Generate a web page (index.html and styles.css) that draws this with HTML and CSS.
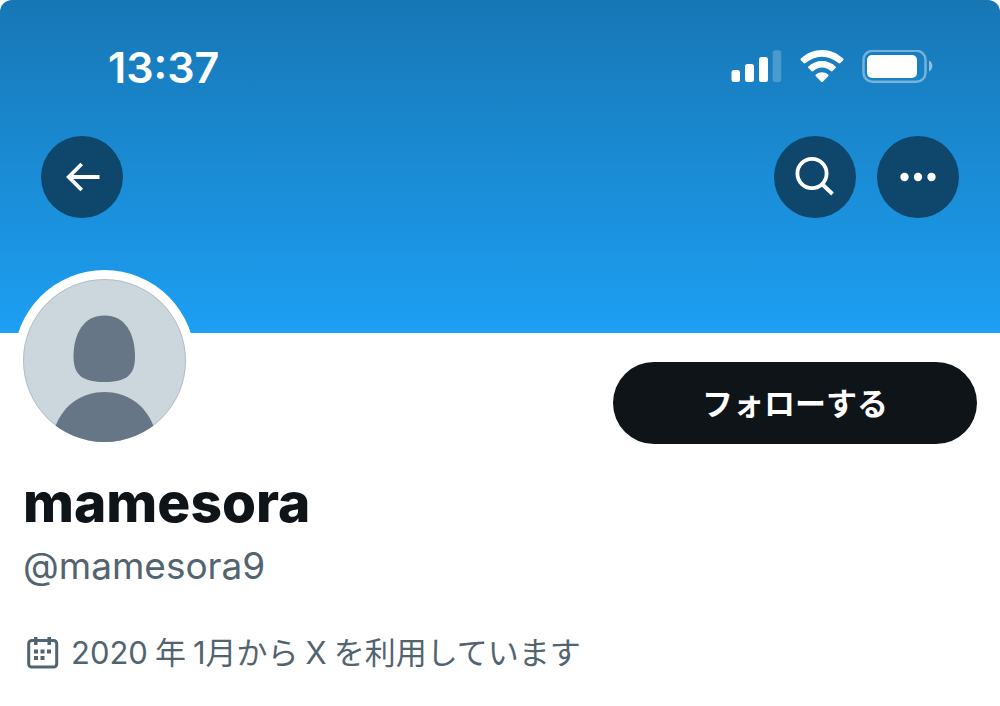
FILE: index.html
```html
<!DOCTYPE html>
<html lang="ja">
<head>
  <meta charset="UTF-8" />
  <meta name="viewport" content="width=device-width, initial-scale=1" />
  <title>mamesora (@mamesora9)</title>
  <link rel="stylesheet" href="styles.css">
</head>
<body>

  <header class="banner">
    <div class="status-bar">
      <time class="clock">13:37</time>
      <div class="status-icons">
        <svg width="51" height="34" viewBox="0 0 51 34" fill="#fff" aria-hidden="true">
          <rect x="0.500" y="20" width="8.500" height="12" rx="2.500" />
          <rect x="14" y="14" width="9" height="18" rx="2.500" />
          <rect x="28" y="7" width="9" height="25" rx="2.500" />
          <rect x="41.700" y="0.300" width="8.500" height="31.700" rx="2.500" opacity="0.22" />
        </svg>
        <svg width="44" height="34" viewBox="0 0 44 34" fill="#fff" aria-hidden="true">
          <path d="M1.200 8.300C7 3 14 0 22 0s15 3 20.800 8.300c.9.800.8 1.500.2 2.200l-2.600 2.500c-.7.700-1.300.6-2 0C33.800 9 28.200 6.700 22 6.700S10.200 9 5.600 13c-.7.600-1.300.7-2 0L1 10.500c-.6-.7-.7-1.400.2-2.200z" />
          <path d="M8.600 16.200c3.800-3.300 8.300-5.300 13.400-5.300s9.600 2 13.400 5.300c.8.700.7 1.300.1 1.900l-2.900 2.900c-.7.700-1.200.5-1.900 0-2.500-2-5.300-3.400-8.700-3.400S15.800 19 13.300 21c-.7.500-1.200.7-1.900 0l-2.900-2.900c-.6-.6-.7-1.200.1-1.900z" />
          <path d="M16 24.500c3.600-3 8.400-3 12 0 .8.700.7 1.200.1 1.800l-5 5.200c-.8.800-1.400.8-2.200 0l-5-5.200c-.6-.6-.7-1.100.1-1.800z" />
        </svg>
        <svg width="71" height="34" viewBox="0 0 71 34" aria-hidden="true">
          <rect x="1.500" y="0.800" width="62" height="31" rx="9" fill="none" stroke="#fff" stroke-opacity="0.4" stroke-width="2.500" />
          <rect x="5" y="5" width="50" height="23" rx="5" fill="#fff" />
          <path d="M67 10.500c4.500 2 4.500 9 0 11z" fill="#fff" fill-opacity="0.5" />
        </svg>
      </div>
    </div>

    <nav class="toolbar">
      <button type="button" class="btn-round" aria-label="戻る">
        <svg width="82" height="82" viewBox="0 0 82 82" fill="none" stroke="#fff" stroke-width="3.800" aria-hidden="true">
          <path d="M58.500 41H28M40.700 28L27.700 41l13 13" />
        </svg>
      </button>
      <div class="toolbar-right">
        <button type="button" class="btn-round" aria-label="検索">
          <svg width="82" height="82" viewBox="0 0 82 82" fill="none" stroke="#fff" stroke-width="3.800" aria-hidden="true">
            <circle cx="38" cy="37.500" r="14.600" />
            <path d="M48 48l10.500 10" />
          </svg>
        </button>
        <button type="button" class="btn-round" aria-label="その他">
          <svg width="82" height="82" viewBox="0 0 82 82" fill="#fff" aria-hidden="true">
            <circle cx="27.500" cy="41" r="4.200" />
            <circle cx="41" cy="41" r="4.200" />
            <circle cx="54.500" cy="41" r="4.200" />
          </svg>
        </button>
      </div>
    </nav>
  </header>

  <main class="profile">
    <div class="profile-top">
      <div class="avatar">
        <svg width="163" height="163" viewBox="0 0 163 163" role="img" aria-label="プロフィール画像">
          <defs>
            <clipPath id="avatarClip"><circle cx="81.500" cy="81.500" r="81.500" /></clipPath>
          </defs>
          <g clip-path="url(#avatarClip)">
            <rect width="163" height="163" fill="#cbd6dd" />
            <path d="M81.500 36.500C102 36.500 112 54 112 78c0 19-10 25-30.500 25S50.500 97 50.500 78C50.500 54 61 36.500 81.500 36.500z" fill="#667686" />
            <path d="M81.500 113C103 113 122 125 130.500 147v18h-98v-18C41 125 60 113 81.500 113z" fill="#667686" />
          </g>
          <circle cx="81.500" cy="81.500" r="81" fill="none" stroke="#667686" stroke-opacity="0.25" />
        </svg>
      </div>
      <button type="button" class="btn-follow">フォローする</button>
    </div>

    <h1 class="name">mamesora</h1>
    <p class="handle">@mamesora9</p>

    <p class="joined">
      <svg width="32" height="32" viewBox="0 0 32 32" fill="#536471" aria-hidden="true">
        <rect x="1.700" y="3.500" width="28" height="26.500" rx="3" fill="none" stroke="#536471" stroke-width="3" />
        <rect x="7" y="0" width="3.500" height="8" />
        <rect x="20.500" y="0" width="3.500" height="8" />
        <rect x="7" y="12.500" width="4" height="4" />
        <rect x="13.500" y="12.500" width="4" height="4" />
        <rect x="20" y="12.500" width="4" height="4" />
        <rect x="7" y="19" width="4" height="4" />
        <rect x="13.500" y="19" width="4" height="4" />
      </svg>
      <span class="joined-text"><span>2020</span><span>年</span><span>1月から</span><span>X</span><span>を利用しています</span></span>
    </p>
  </main>

</body>
</html>
```
FILE: styles.css
```css
* {
  box-sizing: border-box;
}
body {
  margin: 0;
  font-family: Inter, "Noto Sans CJK JP", sans-serif;
  background: #fff;
  color: #0f1419;
}
button {
  border: none;
  padding: 0;
  font-family: inherit;
  cursor: pointer;
}
svg {
  display: block;
  flex: none;
}

/* Banner */
.banner {
  height: 333px;
  padding: 40px 41px 0;
  border-radius: 12px 12px 0 0;
  background: linear-gradient(#1777b5, #1d9ff3);
}
.status-bar {
  display: flex;
  justify-content: space-between;
  align-items: center;
  height: 54px;
  padding: 0 26px 0 67px;
  color: #fff;
}
.clock {
  font-size: 43px;
  font-weight: 600;
  line-height: 54px;
}
.status-icons {
  display: flex;
  gap: 18px;
}
.toolbar {
  display: flex;
  justify-content: space-between;
  margin-top: 42px;
}
.toolbar-right {
  display: flex;
  gap: 21px;
}
.btn-round {
  width: 82px;
  height: 82px;
  border-radius: 50%;
  background: #0e476b;
}

/* Profile */
.profile {
  padding: 0 23px 32px;
}
.profile-top {
  display: flex;
  justify-content: space-between;
  align-items: flex-end;
  margin-top: -63px;
}
.avatar {
  margin: 0 -9px;
  padding: 9px;
  border-radius: 50%;
  background: #fff;
}
.btn-follow {
  width: 364px;
  height: 82px;
  margin-bottom: 7px;
  padding-bottom: 4px;
  border-radius: 41px;
  background: #0f1419;
  color: #fff;
  font-size: 31px;
  font-weight: 700;
}
.name {
  margin: 16px 0 0;
  font-size: 55px;
  font-weight: 800;
  line-height: 70px;
}
.handle {
  margin: 4px 0 0;
  color: #536471;
  font-size: 37px;
  line-height: 50px;
}
.joined {
  display: flex;
  align-items: center;
  gap: 12px;
  margin: 40px 0 0;
  padding-left: 4px;
  color: #536471;
  font-size: 31px;
  line-height: 44px;
}
.joined-text {
  display: flex;
  gap: 7px;
}
```
